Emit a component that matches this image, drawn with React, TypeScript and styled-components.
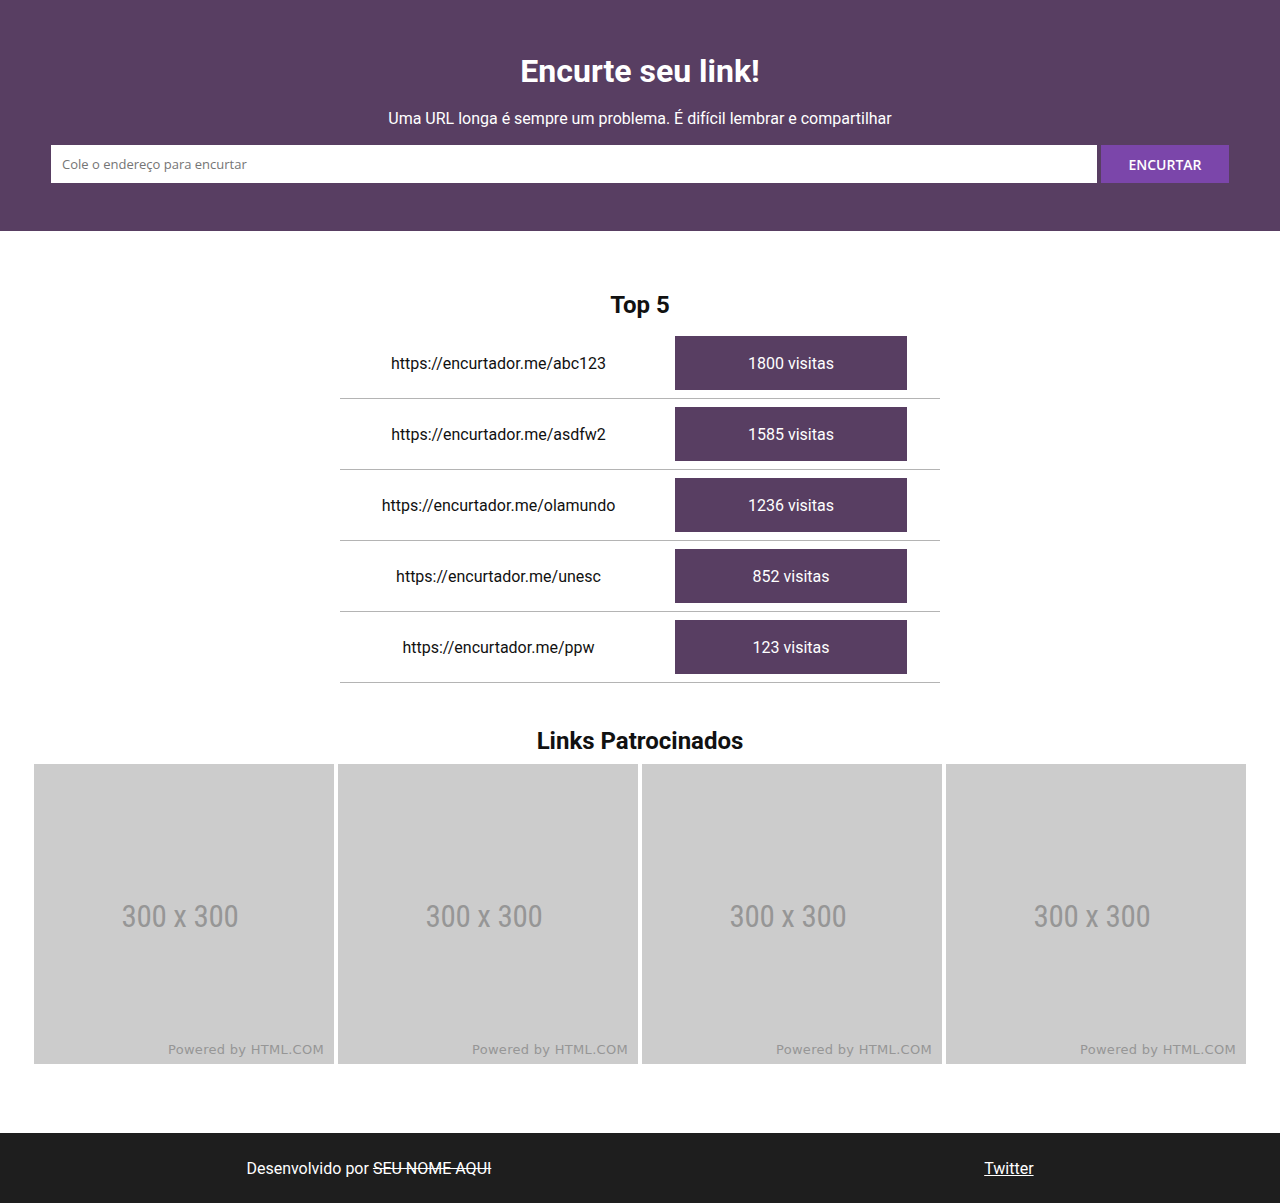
import styled, { createGlobalStyle } from "styled-components";

const GlobalStyle = createGlobalStyle`
  body {
    margin: 0;
    font-family: Roboto, "Liberation Sans", sans-serif;
    background: #fff;
    color: #111;
  }
`;

const topLinks = [
  { url: "https://encurtador.me/abc123", visits: 1800 },
  { url: "https://encurtador.me/asdfw2", visits: 1585 },
  { url: "https://encurtador.me/olamundo", visits: 1236 },
  { url: "https://encurtador.me/unesc", visits: 852 },
  { url: "https://encurtador.me/ppw", visits: 123 },
];

export default function App() {
  return (
    <>
      <GlobalStyle />
      <Header>
        <Title>Encurte seu link!</Title>
        <Subtitle>
          Uma URL longa é sempre um problema. É difícil lembrar e compartilhar
        </Subtitle>
        <Form onSubmit={(e) => e.preventDefault()}>
          <UrlInput placeholder="Cole o endereço para encurtar" />
          <SubmitButton type="submit">ENCURTAR</SubmitButton>
        </Form>
      </Header>

      <Main>
        <SectionTitle>Top 5</SectionTitle>
        <Table>
          {topLinks.map((link) => (
            <Row key={link.url}>
              <UrlCell>{link.url}</UrlCell>
              <VisitsCell>
                <VisitsBadge>{link.visits} visitas</VisitsBadge>
              </VisitsCell>
            </Row>
          ))}
        </Table>

        <SponsorTitle>Links Patrocinados</SponsorTitle>
        <Ads>
          {[0, 1, 2, 3].map((i) => (
            <AdBox key={i}>
              <AdSize>300 x 300</AdSize>
              <AdPowered>Powered by HTML.COM</AdPowered>
            </AdBox>
          ))}
        </Ads>
      </Main>

      <Footer>
        <FooterText>
          Desenvolvido por <Strike>SEU NOME AQUI</Strike>
        </FooterText>
        <FooterLink href="#">Twitter</FooterLink>
      </Footer>
    </>
  );
}

const Header = styled.header`
  background: #583e62;
  color: #fff;
  padding: 52px 51px 48px;
  display: flex;
  flex-direction: column;
  align-items: center;
`;

const Title = styled.h1`
  margin: 0;
  font-size: 32px;
  font-weight: 700;
  line-height: 38px;
`;

const Subtitle = styled.p`
  margin: 19px 0 16px;
  font-size: 16px;
  line-height: 20px;
`;

const Form = styled.form`
  display: flex;
  gap: 4px;
  width: 100%;
`;

const UrlInput = styled.input`
  flex: 1;
  height: 38px;
  box-sizing: border-box;
  border: none;
  outline: none;
  padding: 0 11px;
  font-family: "Open Sans", "Noto Sans", sans-serif;
  font-size: 13px;
  color: #333;

  &::placeholder {
    color: #757575;
  }
`;

const SubmitButton = styled.button`
  width: 128px;
  height: 38px;
  border: none;
  background: #7b46aa;
  color: #fff;
  font-family: "Open Sans", "Noto Sans", sans-serif;
  font-size: 14px;
  font-weight: 600;
  cursor: pointer;
`;

const Main = styled.main`
  display: flex;
  flex-direction: column;
  align-items: center;
  padding: 60px 0 69px;
`;

const SectionTitle = styled.h2`
  margin: 0 0 9px;
  font-size: 24px;
  font-weight: 700;
  line-height: 28px;
`;

const SponsorTitle = styled(SectionTitle)`
  margin: 44px 0 9px;
`;

const Table = styled.div`
  width: 600px;
`;

const Row = styled.div`
  display: grid;
  grid-template-columns: 317px 1fr;
  align-items: center;
  padding: 8px 0;
  border-bottom: 1px solid #b4b4b4;
`;

const UrlCell = styled.div`
  text-align: center;
  font-size: 16px;
`;

const VisitsCell = styled.div`
  padding-left: 18px;
`;

const VisitsBadge = styled.div`
  width: 232px;
  height: 54px;
  background: #583e62;
  color: #fff;
  font-size: 16px;
  display: flex;
  align-items: center;
  justify-content: center;
`;

const Ads = styled.div`
  display: flex;
  gap: 4px;
`;

const AdBox = styled.div`
  width: 300px;
  height: 300px;
  background: #cccccc;
  position: relative;
  display: flex;
  align-items: center;
  justify-content: center;
`;

const AdSize = styled.span`
  font-family: "Liberation Sans Narrow", "Roboto Condensed", Roboto, sans-serif;
  font-stretch: condensed;
  font-size: 31px;
  letter-spacing: -0.3px;
  color: #969696;
  margin: 4px 8px 0 0;
`;

const AdPowered = styled.span`
  position: absolute;
  right: 10px;
  bottom: 7px;
  font-family: "DejaVu Sans", "Open Sans", sans-serif;
  font-size: 13px;
  letter-spacing: 0.3px;
  color: #969696;
`;

const Footer = styled.footer`
  background: #1e1e1e;
  color: #fff;
  height: 70px;
  display: flex;
  align-items: center;
  justify-content: space-around;
  font-size: 16px;
`;

const FooterText = styled.span``;

const Strike = styled.span`
  text-decoration: line-through;
`;

const FooterLink = styled.a`
  color: #fff;
  text-decoration: underline;
`;
